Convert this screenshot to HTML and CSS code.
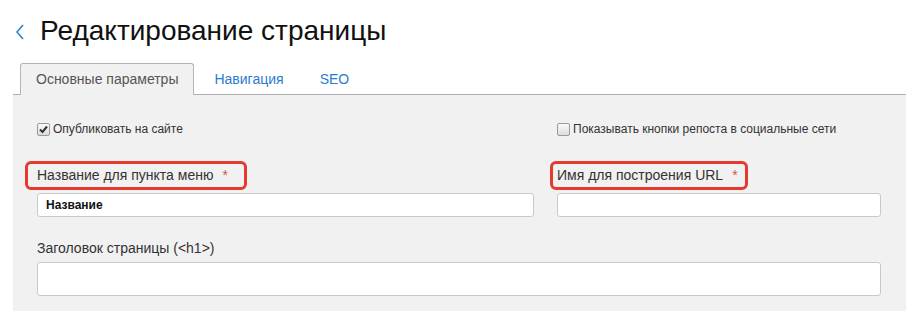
FILE: index.html
```html
<!DOCTYPE html>
<html lang="ru">
<head>
<meta charset="utf-8">
<title>Редактирование страницы</title>
<link rel="stylesheet" href="styles.css">
</head>
<body>
<header class="page-header">
  <a class="back" href="#" aria-label="Назад">
    <svg width="10" height="16" viewBox="0 0 10 16"><polyline points="8,1 2,8 8,15" fill="none" stroke="#2b87d1" stroke-width="1.6"/></svg>
  </a>
  <h1 class="title">Редактирование страницы</h1>
</header>
<nav class="tabs">
  <a class="tab tab-active" href="#">Основные параметры</a>
  <a class="tab" href="#">Навигация</a>
  <a class="tab" href="#">SEO</a>
</nav>
<section class="panel">
  <div class="grid">
    <label class="check"><input type="checkbox" checked><span>Опубликовать на сайте</span></label>
    <label class="check"><input type="checkbox"><span>Показывать кнопки репоста в социальные сети</span></label>

    <div class="field">
      <span class="label mark mark-left">Название для пункта меню<span class="req">*</span></span>
      <input class="input input-bold" type="text" value="Название">
    </div>
    <div class="field">
      <span class="label mark mark-right">Имя для построения URL<span class="req">*</span></span>
      <input class="input" type="text">
    </div>

    <div class="field field-wide">
      <span class="label plain">Заголовок страницы (&lt;h1&gt;)</span>
      <input class="input input-tall" type="text">
    </div>
  </div>
</section>
</body>
</html>
```
FILE: styles.css
```css
html, body {
  margin: 0;
  padding: 0;
  background: #fff;
  font-family: Arial, "Liberation Sans", sans-serif;
  color: #333;
}

.page-header {
  display: flex;
  align-items: center;
  padding: 15px 0 0 15px;
  height: 32px;
}

.back {
  display: flex;
  width: 10px;
  height: 16px;
  margin-right: 15px;
  margin-top: 2px;
}

.title {
  margin: 0;
  font-size: 28px;
  line-height: 32px;
  font-weight: normal;
  color: #111;
}

.tabs {
  display: flex;
  margin: 16px 0 0 20px;
  position: relative;
  z-index: 1;
}

.tab {
  display: block;
  padding: 7px 15px 8px;
  border: 1px solid transparent;
  border-bottom: none;
  margin-right: 4px;
  margin-bottom: -1px;
  font-size: 14px;
  line-height: 16px;
  color: #2b7bd1;
  text-decoration: none;
  border-radius: 3px 3px 0 0;
}

.tab-active {
  color: #555;
  background: #f1f1f1;
  border-color: #b5b5b5;
}

.panel {
  margin-left: 13px;
  background: #f1f1f1;
  border-top: 1px solid #b0b0b0;
  padding: 26px 25px 14px 24px;
  height: 176px;
}

.grid {
  display: grid;
  grid-template-columns: 497px 324px;
  column-gap: 23px;
}

.check {
  display: flex;
  align-items: center;
  font-size: 12px;
  line-height: 16px;
  color: #333;
}

.check input {
  appearance: none;
  -webkit-appearance: none;
  width: 13px;
  height: 13px;
  margin: 0 3px 0 0;
  border: 1px solid #9a9a9a;
  border-radius: 2px;
  background: linear-gradient(#fafafa, #dcdcdc);
  box-sizing: border-box;
}

.check input:checked {
  background: url("data:image/svg+xml;utf8,<svg xmlns='http://www.w3.org/2000/svg' width='11' height='11' viewBox='0 0 11 11'><polyline points='2,5.5 4.5,8 9,2.5' fill='none' stroke='%23333' stroke-width='2'/></svg>") center/11px 11px no-repeat, linear-gradient(#fafafa, #dcdcdc);
}

.field {
  display: flex;
  flex-direction: column;
  align-items: flex-start;
}

.field-wide {
  grid-column: 1 / 3;
}

.label {
  font-size: 14px;
  line-height: 17px;
  color: #333;
}

.mark {
  margin-top: 24px;
  border: 3px solid #e53a2f;
  border-radius: 6px;
  padding: 3px 16px 3px 9px;
  margin-left: -12px;
  margin-bottom: 3px;
}

.mark-right {
  padding-left: 4px;
  padding-right: 7px;
  margin-left: -7px;
}

.req {
  color: #d9534f;
  margin-left: 9px;
}

.plain {
  margin-top: 23px;
  margin-bottom: 5px;
}

.input {
  align-self: stretch;
  box-sizing: border-box;
  height: 24px;
  border: 1px solid #c9c9c9;
  border-radius: 3px;
  background: #fff;
  padding: 0 8px;
  font-family: Arial, "Liberation Sans", sans-serif;
  font-size: 12px;
  color: #111;
  outline: none;
}

.input-bold {
  font-weight: bold;
}

.input-tall {
  height: 34px;
}
```
